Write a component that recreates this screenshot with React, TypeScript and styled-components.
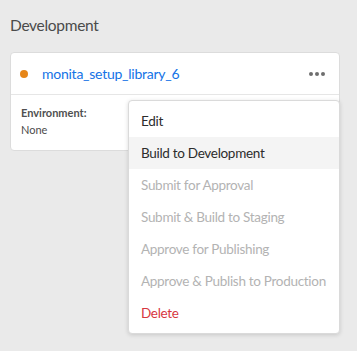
import React from "react";
import styled, { createGlobalStyle } from "styled-components";

const GlobalStyle = createGlobalStyle`
  html, body {
    margin: 0;
    padding: 0;
    background: #eaeaea;
    font-family: Lato, "Open Sans", sans-serif;
  }
`;

const Page = styled.div`
  width: 357px;
  height: 351px;
  padding: 15px 17px 0 10px;
  box-sizing: border-box;
  position: relative;
`;

const Heading = styled.h2`
  margin: 0 0 16px;
  font-size: 15.5px;
  font-weight: 400;
  letter-spacing: -0.3px;
  line-height: 21px;
  color: #4b4b4b;
`;

const Card = styled.div`
  background: #fff;
  border: 1px solid #dcdcdc;
  border-radius: 4px;
  width: 330px;
  box-sizing: border-box;
`;

const CardHeader = styled.div`
  display: flex;
  align-items: center;
  height: 41px;
  padding: 0 14px 0 9px;
  border-bottom: 1px solid #e6e6e6;
`;

const StatusDot = styled.span<{ $color: string }>`
  width: 8px;
  height: 8px;
  border-radius: 50%;
  background: ${(p) => p.$color};
  margin: 0 14px 0 0;
  flex-shrink: 0;
`;

const LibraryLink = styled.a`
  color: #1473e6;
  font-size: 14px;
  letter-spacing: -0.25px;
  text-decoration: none;
  flex: 1;
`;

const MoreButton = styled.div`
  display: flex;
  gap: 2px;
  span {
    width: 4px;
    height: 4px;
    border-radius: 50%;
    background: #6e6e6e;
  }
`;

const CardBody = styled.div`
  padding: 10px 10px 11px;
`;

const Label = styled.div`
  font-size: 11px;
  font-weight: 700;
  color: #505050;
  line-height: 16px;
`;

const Value = styled.div`
  font-size: 11px;
  color: #4b4b4b;
  line-height: 18px;
`;

const Menu = styled.ul`
  position: absolute;
  left: 128px;
  top: 100px;
  width: 212px;
  margin: 0;
  padding: 4px 0;
  list-style: none;
  background: #fff;
  border: 1px solid #dadada;
  border-radius: 4px;
  box-shadow: 0 1px 4px rgba(0, 0, 0, 0.15);
  box-sizing: border-box;
`;

type Tone = "normal" | "disabled" | "danger";

const toneColor: Record<Tone, string> = {
  normal: "#2c2c2c",
  disabled: "#b3b3b3",
  danger: "#d7373f",
};

const MenuItem = styled.li<{ $tone: Tone; $active?: boolean }>`
  height: 32px;
  display: flex;
  align-items: center;
  padding: 0 12px;
  font-size: 13.5px;
  letter-spacing: -0.3px;
  color: ${(p) => toneColor[p.$tone]};
  background: ${(p) => (p.$active ? "#f4f4f4" : "transparent")};
  white-space: nowrap;
`;

const items: { label: string; tone: Tone; active?: boolean }[] = [
  { label: "Edit", tone: "normal" },
  { label: "Build to Development", tone: "normal", active: true },
  { label: "Submit for Approval", tone: "disabled" },
  { label: "Submit & Build to Staging", tone: "disabled" },
  { label: "Approve for Publishing", tone: "disabled" },
  { label: "Approve & Publish to Production", tone: "disabled" },
  { label: "Delete", tone: "danger" },
];

const App: React.FC = () => {
  return (
    <>
      <GlobalStyle />
      <Page>
        <Heading>Development</Heading>
        <Card>
          <CardHeader>
            <StatusDot $color="#e68619" />
            <LibraryLink href="#">monita_setup_library_6</LibraryLink>
            <MoreButton>
              <span />
              <span />
              <span />
            </MoreButton>
          </CardHeader>
          <CardBody>
            <Label>Environment:</Label>
            <Value>None</Value>
          </CardBody>
        </Card>
        <Menu>
          {items.map((item) => (
            <MenuItem key={item.label} $tone={item.tone} $active={item.active}>
              {item.label}
            </MenuItem>
          ))}
        </Menu>
      </Page>
    </>
  );
};

export default App;
